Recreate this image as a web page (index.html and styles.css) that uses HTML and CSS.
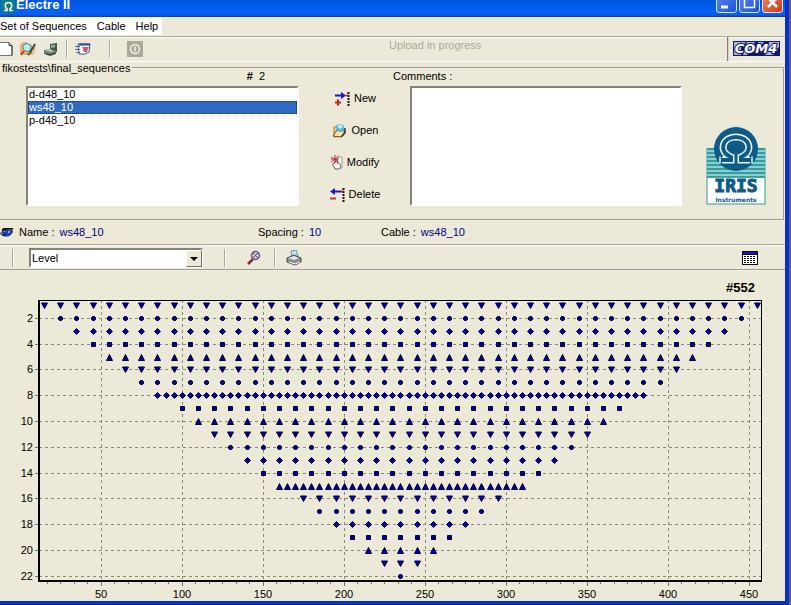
FILE: index.html
```
<!DOCTYPE html>
<html lang="en">
<head>
    <meta charset="UTF-8">
    <meta name="viewport" content="width=device-width, initial-scale=1.0">
    <title>Electre II</title>
    <link rel="stylesheet" href="styles.css">
</head>
<body>
<div class="window">
    <header class="titlebar">
        <svg class="app-icon" width="14" height="13" viewBox="0 0 14 13">
            <rect width="14" height="13" fill="#0a7f86"/>
            <path d="M3 10.500h3V9C3.500 7 3.500 2.500 7.500 2.500S11.500 7 9 9v1.500h3" fill="none" stroke="#fff" stroke-width="1.600"/>
        </svg>
        <h1>Electre II</h1>
        <div class="window-buttons">
            <button type="button" aria-label="Minimize"><svg width="19" height="19"><path d="M4 14h7" stroke="#fff" stroke-width="3"/></svg></button>
            <button type="button" aria-label="Maximize"><svg width="19" height="19"><path d="M4.500 5h10v9.500h-10z" fill="none" stroke="#fff" stroke-width="1.500"/></svg></button>
            <button type="button" class="close" aria-label="Close"><svg width="19" height="19"><path d="M5 5l9 9M14 5l-9 9" stroke="#fff" stroke-width="2.500"/></svg></button>
        </div>
    </header>

    <nav class="menubar">
        <button type="button">Set of Sequences</button>
        <button type="button">Cable</button>
        <button type="button">Help</button>
    </nav>

    <div class="toolbar">
        <div class="tools">
            <button type="button" aria-label="New set">
                <svg width="16" height="16"><path d="M0 1.500h9l3 3v10H0" fill="#fff" stroke="#777"/><path d="M9 1.500v3h3M12 5v9.500" fill="none" stroke="#333"/></svg>
            </button>
            <button type="button" aria-label="Find set">
                <svg width="16" height="16"><path d="M1 4l2-2h4l1 2h3v9H1z" fill="#ffb85c" stroke="#d0853a"/><circle cx="7" cy="6.500" r="4" fill="#b8ecf7" stroke="#5a8296"/><path d="M4 10l-3 4" stroke="#c63b1c" stroke-width="2"/><path d="M8 14l2-2 5-9" fill="none" stroke="#38434b" stroke-width="2"/><path d="M9 13h4l2-7" fill="none" stroke="#d4a020"/></svg>
            </button>
            <button type="button" aria-label="Device">
                <svg width="16" height="16"><path d="M7 3l7-1v9l-7 1z" fill="#45584f"/><path d="M8 4l4-.500v3L8 7z" fill="#86a99c"/><path d="M1 9l6-1 6 2v3l-6 2-6-2z" fill="#6f7d78"/><path d="M1 9l6-1 4 2-4 1z" fill="#b8c5bd"/><path d="M3 13l5 1 5-2" fill="none" stroke="#20332c"/></svg>
            </button>
            <span class="sep"></span>
            <button type="button" aria-label="Transfer">
                <svg width="16" height="16"><path d="M3 3h12l-1 8-4 2H4z" fill="#f0f4fb" stroke="#37609b"/><path d="M4 3.500h11" stroke="#2456a5" stroke-width="2"/><path d="M7 6h7l-2 5H9z" fill="#e4919a"/><path d="M8 6l4 5M11 6l-3 4M13 6l-3 5" stroke="#b63b4e"/><path d="M0 5.500h5M0 8.500h5M1 11.500h4" stroke="#4a6ca0"/></svg>
            </button>
            <span class="sep wide"></span>
            <button type="button" aria-label="Stop" disabled>
                <svg width="16" height="16"><rect width="16" height="16" fill="#aaa89a"/><circle cx="8" cy="8" r="4.500" fill="none" stroke="#f1efe4" stroke-width="1.500"/><path d="M8 5.500v5" stroke="#f1efe4" stroke-width="1.500"/></svg>
            </button>
        </div>
        <p class="status">Upload in progress</p>
        <div class="port">
            <svg width="47" height="15" viewBox="0 0 47 15">
                <rect width="47" height="15" fill="#10186e"/>
                <path d="M1 1h12L8 6v8H1zM14 1h8l-8 13h-4zM25 1h6l-5 6zM36 1h10v5l-6 8h-8z" fill="#aab4dc"/>
                <text x="23" y="12" class="port-name">COM4</text>
            </svg>
        </div>
    </div>

    <fieldset class="sequences">
        <legend>fikostests\final_sequences</legend>
        <div class="list">
            <label for="seq-list" class="count"><b>#</b>&nbsp; 2</label>
            <select id="seq-list" size="9">
                <option>d-d48_10</option>
                <option selected>ws48_10</option>
                <option>p-d48_10</option>
            </select>
        </div>
        <div class="actions">
            <button type="button">
                <svg width="18" height="16"><path d="M2 5.500h8" stroke="#1616d8" stroke-width="2"/><path d="M8 2l5 3.500L8 9z" fill="#1616d8"/><path d="M2 12.500h6M5 9.500v6" stroke="#e01818" stroke-width="2"/><path d="M15.500 2v14" stroke="#111" stroke-width="2" stroke-dasharray="2 1"/><path d="M13 5.500h2" stroke="#e01818" stroke-width="2"/></svg>New
            </button>
            <button type="button">
                <svg width="18" height="16"><path d="M3 5l4-1 3 3 4 1-2 6-9 1z" fill="#ffd36a" stroke="#a7791b"/><path d="M2 14l4-6 8 1-4 6z" fill="#ffe49a" stroke="#6b5420"/><circle cx="9" cy="6" r="4" fill="#57b4dc"/><path d="M6 4l4-2 2 3-3 2z" fill="#c5effa"/><path d="M14 6v5l-4 4" fill="none" stroke="#373d42" stroke-width="1.500"/></svg>Open
            </button>
            <button type="button">
                <svg width="14" height="16"><path d="M7 3h5v11H5" fill="#faf8f0" stroke="#999"/><path d="M5 14c-3-3-3-5 0-5V5h2v4c5 0 4 5 2 6H5z" fill="#fff" stroke="#555"/><path d="M5 1v8M1 3l8 5M9 2L1 8M1 5h8" stroke="#c92d3c"/></svg>Modify
            </button>
            <button type="button">
                <svg width="17" height="16"><path d="M4 5.500h8" stroke="#1616d8" stroke-width="2"/><path d="M6 2L1 5.500 6 9z" fill="#1616d8"/><path d="M1 12.500h6" stroke="#d03020" stroke-width="2"/><path d="M14.500 2v14" stroke="#111" stroke-width="2" stroke-dasharray="2 1"/><path d="M12 5.500h2" stroke="#e01818" stroke-width="2"/></svg>Delete
            </button>
        </div>
        <div class="comments">
            <label for="comments">Comments :</label>
            <textarea id="comments"></textarea>
        </div>
        <svg class="logo" width="60" height="78" viewBox="0 0 60 78" role="img" aria-label="IRIS Instruments">
            <rect x="1" y="22" width="58" height="55" fill="#fff" stroke="#2b9c9b"/>
            <rect x="1" y="22" width="58" height="28" fill="#8fcfcb"/>
            <path d="M1 22h58M1 26h58M1 30h58M1 34h58M1 38h58M1 42h58M1 46h58M1 50h58" stroke="#168b8f" stroke-width="1.500"/>
            <circle cx="30" cy="22" r="22" fill="#0e5a8a"/>
            <path d="M16 33h9v-3C12 25 16 10 30 10s18 15 5 20v3h9" fill="none" stroke="#e4f6fa" stroke-width="7"/>
            <path d="M14 33h11v-3C12 25 16 10 30 10s18 15 5 20v3h11" fill="none" stroke="#0e5a8a" stroke-width="4"/>
            <path d="M14 29.500v7M46 29.500v7" stroke="#e4f6fa" stroke-width="1.500"/>
            <text x="30" y="65" class="logo-name">IRIS</text>
            <text x="30" y="75" class="logo-sub">Instruments</text>
        </svg>
    </fieldset>

    <div class="info">
        <svg width="14" height="10"><path d="M0 6c3-6 9-6 13-3-1 5-8 8-13 3z" fill="#1d2d62"/><path d="M1 7c2-3 3-4 6-4" fill="none" stroke="#8ba9d3"/><circle cx="8" cy="5" r="3" fill="#1742c8"/><circle cx="9" cy="4" r="1" fill="#a8d0ff"/><path d="M2 2c4-2 8-2 11-1" fill="none" stroke="#111" stroke-width="2"/></svg>
        <dl>
            <div><dt>Name :</dt><dd>ws48_10</dd></div>
            <div><dt>Spacing :</dt><dd>10</dd></div>
            <div><dt>Cable :</dt><dd>ws48_10</dd></div>
        </dl>
    </div>

    <div class="view-bar">
        <span class="sep"></span>
        <div class="combo">
            <select aria-label="View">
                <option>Level</option>
            </select>
            <span class="arrow"></span>
        </div>
        <span class="sep"></span>
        <button type="button" aria-label="Zoom">
            <svg width="16" height="16"><path d="M2 14l5-5" stroke="#74302e" stroke-width="2.500"/><circle cx="9.500" cy="5.500" r="4" fill="#d9cbe4" stroke="#62548a" stroke-width="1.500"/><path d="M7 3l5 5M12 3L7 8" stroke="#7a3550"/></svg>
        </button>
        <span class="sep"></span>
        <button type="button" aria-label="Print">
            <svg width="16" height="16"><path d="M5 1l5-1 2 6-6 2z" fill="#bfe0fa" stroke="#7592ac"/><path d="M1 8l7-3 7 3v4l-6 3-8-3z" fill="#8b9090" stroke="#454b4b"/><path d="M2 8l6-2 5 2-5 2z" fill="#e4e8e4"/><path d="M3 12l6 2 5-2" fill="none" stroke="#fff"/></svg>
        </button>
        <button type="button" class="table-button" aria-label="Show table">
            <svg width="16" height="14" shape-rendering="crispEdges"><rect width="16" height="14" fill="#111"/><rect x="1" y="1" width="14" height="2" fill="#1414b4"/><rect x="1" y="4" width="14" height="9" fill="#fff"/><path d="M2 5.500h12M2 7.500h12M2 9.500h12M2 11.500h12" stroke="#111" stroke-dasharray="2 1"/></svg>
        </button>
    </div>

    <main>
        <svg id="chart" viewBox="0 0 785 330" role="img" aria-label="Level against position, 552 points"></svg>
    </main>
</div>
<script src="chart.js"></script>
</body>
</html>
```
FILE: styles.css
```
* {
    box-sizing: border-box;
}
body {
    margin: 0;
    padding-right: 2px;
    background: #6b5a80;
    font-family: "Liberation Sans", Arial, sans-serif;
    font-size: 11px;
    line-height: 13px;
    color: #000;
}
button, select, textarea {
    font: inherit;
    color: inherit;
}
button {
    border: 0;
    padding: 0;
    background: none;
}
svg {
    display: block;
    flex: none;
}
.window {
    background: #ece9d8;
    border-right: 4px solid #0831c9;
    border-bottom: 4px solid #0831b0;
}

/* title bar */
.titlebar {
    display: flex;
    height: 17px;
    overflow: hidden;
    background: linear-gradient(#0054e3, #0560f4 60%, #0660f8 85%, #0340b8);
}
.app-icon {
    margin-left: 1px;
}
.titlebar h1 {
    flex: 1;
    margin: 0 0 0 1px;
    font-size: 13px;
    line-height: 9px;
    color: #fff;
}
.window-buttons {
    display: flex;
    gap: 2px;
    margin: -8px 2px 0 0;
}
.window-buttons button {
    width: 21px;
    height: 21px;
    border: 1px solid #d5e2fb;
    border-radius: 3px;
    background: linear-gradient(135deg, #5c8cf4, #1d4fd6);
}
.window-buttons .close {
    background: linear-gradient(135deg, #ec8a6c, #cf3a14);
}

/* menu */
.menubar {
    display: flex;
    gap: 10px;
    width: 162px;
    height: 18px;
    background: #fff;
}
.menubar button {
    white-space: nowrap;
}

/* toolbars */
.toolbar {
    display: flex;
    height: 26px;
    margin-top: 1px;
    border-top: 1px solid #aca899;
    border-bottom: 1px solid #fff;
    box-shadow: inset 0 1px #fff;
}
.tools {
    display: flex;
    align-items: center;
    gap: 7px;
    width: 389px;
}
.tools button:nth-child(2) {
    margin-left: -3px;
}
.tools .wide {
    margin: 0 9px 0 11px;
}
.sep {
    width: 2px;
    height: 18px;
    border-left: 1px solid #aca899;
    border-right: 1px solid #fff;
}
.status {
    flex: 1;
    margin: 2px 0 0;
    color: #aca899;
}
.port {
    padding: 4px 5px 0 4px;
    border-left: 2px groove #d6d2c2;
}
.port-name {
    font: italic bold 13px "DejaVu Sans", sans-serif;
    text-anchor: middle;
    fill: #fff;
    stroke: #10186e;
    stroke-width: 2px;
    paint-order: stroke;
}

/* set of sequences */
.sequences {
    display: grid;
    grid-template-columns: 273fr 111px 272fr 101px;
    min-width: 0;
    margin: 4px 0 0;
    padding: 0 0 13px 26px;
    border: 2px groove #f2f0e4;
    border-left: 0;
}
.sequences legend {
    padding: 0 2px;
    margin-left: -26px;
    line-height: 4px;
}
.list, .comments {
    display: flex;
    flex-direction: column;
    gap: 3px;
}
.count {
    padding-right: 34px;
    text-align: right;
}
.list select, .comments textarea {
    width: 100%;
    height: 120px;
    margin: 0;
    padding: 0;
    border: 2px solid;
    border-color: #858378 #fff #fff #858378;
    border-radius: 0;
    background: #fff;
    outline: 0;
    overflow: hidden;
    resize: none;
}
.list option {
    min-height: 13px;
    padding: 0 1px;
    line-height: 13px;
}
.list option:checked {
    background: linear-gradient(#316ac5, #316ac5);
    -webkit-text-fill-color: #fff;
    outline: 1px dotted #12305c;
    outline-offset: -1px;
}
.comments label {
    margin-left: -17px;
}
.actions {
    display: flex;
    flex-direction: column;
    gap: 16px;
    padding-top: 20px;
}
.actions button {
    display: flex;
    align-items: center;
    justify-content: center;
    gap: 3px;
    height: 16px;
}
.logo {
    margin: 57px 0 0 24px;
}
.logo-name {
    font: bold 18px "DejaVu Sans Mono", monospace;
    text-anchor: middle;
    fill: #0e5a8a;
    stroke: #0e5a8a;
    stroke-width: 1px;
}
.logo-sub {
    font: bold 6px "DejaVu Sans", sans-serif;
    text-anchor: middle;
    fill: #0e5a8a;
}

/* selected sequence */
.info {
    display: flex;
    align-items: center;
    height: 24px;
    border-bottom: 1px solid #aca899;
}
.info dl {
    display: grid;
    grid-template-columns: 239px 123px 1fr;
    flex: 1;
    margin: 0 0 0 5px;
}
.info dl div {
    display: flex;
    gap: 5px;
}
.info dd {
    margin: 0;
    color: #000080;
}
.view-bar {
    display: flex;
    align-items: center;
    height: 26px;
    padding: 0 27px 0 12px;
    border-top: 1px solid #fff;
    border-bottom: 2px groove #f2f0e4;
}
.combo {
    position: relative;
    width: 174px;
    margin: 0 21px 0 15px;
}
.combo select {
    display: block;
    width: 100%;
    height: 20px;
    padding: 0 1px;
    appearance: none;
    border: 2px solid;
    border-color: #858378 #fff #fff #858378;
    border-radius: 0;
    background: #fff;
    line-height: 16px;
}
.combo .arrow {
    position: absolute;
    top: 2px;
    right: 1px;
    width: 16px;
    height: 17px;
    border: 1px solid;
    border-color: #fff #716f64 #716f64 #fff;
    background: #ece9d8;
    pointer-events: none;
}
.combo .arrow::after {
    content: "";
    display: block;
    margin: 6px 3px;
    border: 4px solid transparent;
    border-top-color: #000;
    border-bottom: 0;
}
.view-bar button {
    margin: 0 12px 0 20px;
}
.view-bar .sep:nth-of-type(3) + button {
    margin-left: 10px;
}
.view-bar .table-button {
    margin-right: 0;
    margin-left: auto;
}

/* chart */
#chart {
    width: 100%;
    height: auto;
}
#chart .grid {
    stroke: #8b897c;
    stroke-dasharray: 3 3;
    shape-rendering: crispEdges;
}
#chart .tick {
    stroke: #77756a;
    shape-rendering: crispEdges;
}
#chart .frame {
    fill: none;
    stroke: #000;
    shape-rendering: crispEdges;
}
#chart .axis {
    fill: none;
    stroke: #000;
    stroke-width: 2px;
    shape-rendering: crispEdges;
}
#chart .marker {
    fill: #00009a;
    stroke: #000040;
}
#chart .x-label {
    text-anchor: middle;
}
#chart .y-label {
    text-anchor: end;
}
#chart .total {
    font-size: 13px;
    font-weight: bold;
    text-anchor: end;
}
```
FILE: chart.js
```
// [first position, last position, step] for each level, from level 1 down
const levels = [
    [15, 455, 10], [25, 445, 10], [35, 435, 10], [45, 425, 10],
    [55, 415, 10], [65, 405, 10], [75, 395, 10], [85, 385, 5],
    [100, 370, 10], [110, 360, 10], [120, 350, 10], [130, 340, 10],
    [140, 330, 10], [150, 320, 10], [160, 310, 5], [175, 295, 10],
    [185, 285, 10], [195, 275, 10], [205, 265, 10], [215, 255, 10],
    [225, 245, 10], [235, 235, 10]
];

// marker shapes repeat every five levels
const shapes = [
    'M-3 -2.5h6L0 3z',
    'M-1 -2h2L2 -1v2L1 2h-2L-2 1v-2z',
    'M0 -3L3 0L0 3L-3 0z',
    'M-2 -2h4v4h-4z',
    'M-3 3h6L0 -3z'
];

const left = 39, right = 761, top_ = 29, bottom = 310;
const px = v => Math.round(19.7 + v * 1.62);
const py = n => Math.round(21 + n * 12.9);

const line = (cls, x1, y1, x2, y2) =>
    `<path class="${cls}" d="M${x1} ${y1}L${x2} ${y2}"/>`;

let out = '';

for (let n = 2; n <= 22; n += 2) {
    const y = py(n) + 0.5;
    out += line('grid', left, y, right, y);
    out += line('tick', left - 4, y, left, y);
    out += `<text class="y-label" x="33" y="${py(n) + 4}">${n}</text>`;
}

for (let v = 50; v <= 450; v += 50) {
    const x = px(v) + 0.5;
    out += line('grid', x, top_, x, bottom);
    out += line('tick', x, bottom, x, bottom + 5);
    out += `<text class="x-label" x="${px(v)}" y="327">${v}</text>`;
}

// six minor ticks to each 50 units
for (let i = 2; i <= 54; i++) {
    const x = px(i * 50 / 6) + 0.5;
    out += line('tick', x, bottom, x, bottom + 3);
}

out += `<path class="frame" d="M${left} ${top_ + 0.5}H${right + 0.5}V${bottom}"/>`;
out += `<path class="axis" d="M${left} ${top_}V${bottom}H${right + 1}"/>`;

let total = 0;
levels.forEach(([first, last, step], i) => {
    for (let v = first; v <= last; v += step) {
        out += `<path class="marker" transform="translate(${px(v) + 0.5} ${py(i + 1) + 0.5})" d="${shapes[i % 5]}"/>`;
        total++;
    }
});

out += `<text class="total" x="755" y="21">#${total}</text>`;

document.getElementById('chart').innerHTML = out;
```
